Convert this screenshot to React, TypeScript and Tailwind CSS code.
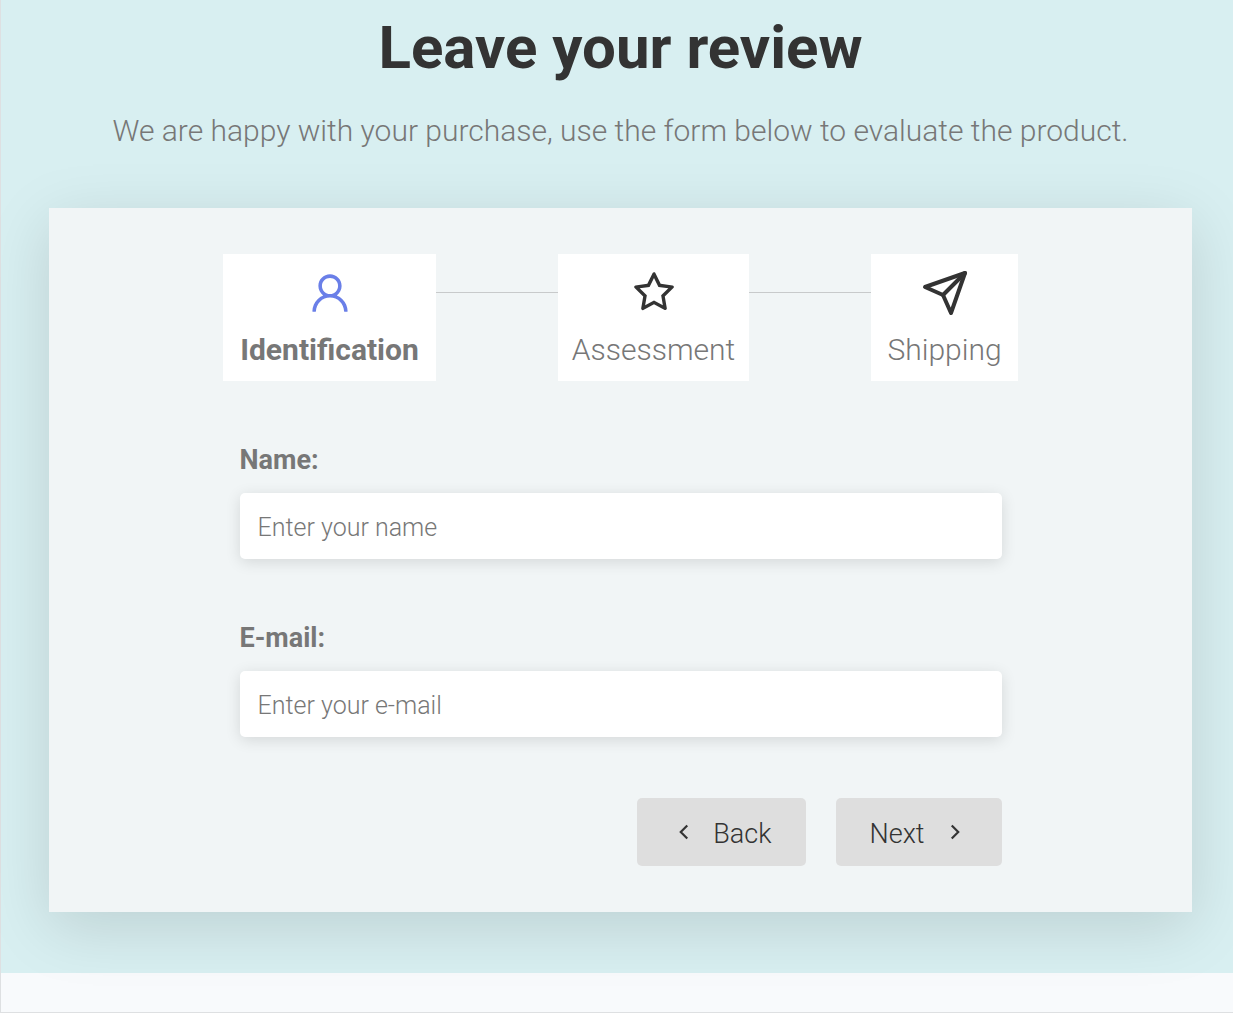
import { useState } from "react";
import { AiOutlineStar, AiOutlineUser } from "react-icons/ai";
import { FiSend } from "react-icons/fi";
import { GrFormNext, GrFormPrevious } from "react-icons/gr";

function Connector() {
  return <div className="mt-[38px] h-px flex-1 bg-[#c8cacb]" />;
}

function Field({ id, type, label, placeholder }: { id: string; type: string; label: string; placeholder: string }) {
  const [value, setValue] = useState("");
  return (
    <div className="flex flex-col gap-[14px]">
      <label htmlFor={id} className="text-[27px] leading-[38px] font-bold">
        {label}
      </label>
      <input
        id={id}
        type={type}
        value={value}
        placeholder={placeholder}
        onChange={(e) => setValue(e.target.value)}
        className="h-[66px] w-full rounded-[5px] bg-white px-[18px] pt-0.5 text-[25px] shadow-[0_3px_15px_rgba(0,0,0,0.12)] outline-none placeholder:text-[#777]"
      />
    </div>
  );
}

export default function App() {
  return (
    <div className="border-b border-l border-[#dee0e2] bg-[#f8fafc] pb-[39px] font-['Roboto',sans-serif] font-[350] text-[#777]">
      <main className="bg-[#d8eff1] pr-[41px] pb-[61px] pl-12">
        <header className="text-center">
          <h1 className="pt-2 text-[60px] leading-20 font-bold text-[#333]">Leave your review</h1>
          <p className="pt-[21px] text-[30px] leading-11">
            We are happy with your purchase, use the form below to evaluate the product.
          </p>
        </header>

        <section className="mt-[55px] bg-[#f1f5f6] pt-[46px] pb-[46px] shadow-[0_15px_60px_rgba(0,0,0,0.13)]">
          <div className="mx-auto flex w-full max-w-[795px] items-start">
            <div className="flex h-[127px] w-[213px] flex-col items-center bg-white pt-[15px]">
              <AiOutlineUser className="size-12 text-[#6a7fe8]" />
              <span className="mt-[13px] text-[30px] leading-10 font-bold">Identification</span>
            </div>
            <Connector />
            <div className="flex h-[127px] w-[191px] flex-col items-center bg-white pt-[15px]">
              <AiOutlineStar className="size-12 text-[#333]" />
              <span className="mt-[13px] text-[30px] leading-10">Assessment</span>
            </div>
            <Connector />
            <div className="flex h-[127px] w-[147px] flex-col items-center bg-white pt-[15px]">
              <FiSend className="size-12 text-[#333]" />
              <span className="mt-[13px] text-[30px] leading-10">Shipping</span>
            </div>
          </div>

          <form className="mx-auto mt-15 w-2/3" onSubmit={(e) => e.preventDefault()}>
            <div className="flex flex-col gap-15">
              <Field id="name" type="text" label="Name:" placeholder="Enter your name" />
              <Field id="email" type="email" label="E-mail:" placeholder="Enter your e-mail" />
            </div>
            <div className="mt-[61px] flex justify-end gap-[30px] text-[27px] text-[#333]">
              <button type="button" className="flex h-[68px] w-[169px] items-center justify-between rounded-[5px] bg-[#dedede] px-[34px]">
                <GrFormPrevious className="size-[26px]" />
                <span className="pt-1">Back</span>
              </button>
              <button type="submit" className="flex h-[68px] w-[166px] items-center justify-between rounded-[5px] bg-[#dedede] px-[34px]">
                <span className="pt-1">Next</span>
                <GrFormNext className="size-[26px]" />
              </button>
            </div>
          </form>
        </section>
      </main>
    </div>
  );
}
